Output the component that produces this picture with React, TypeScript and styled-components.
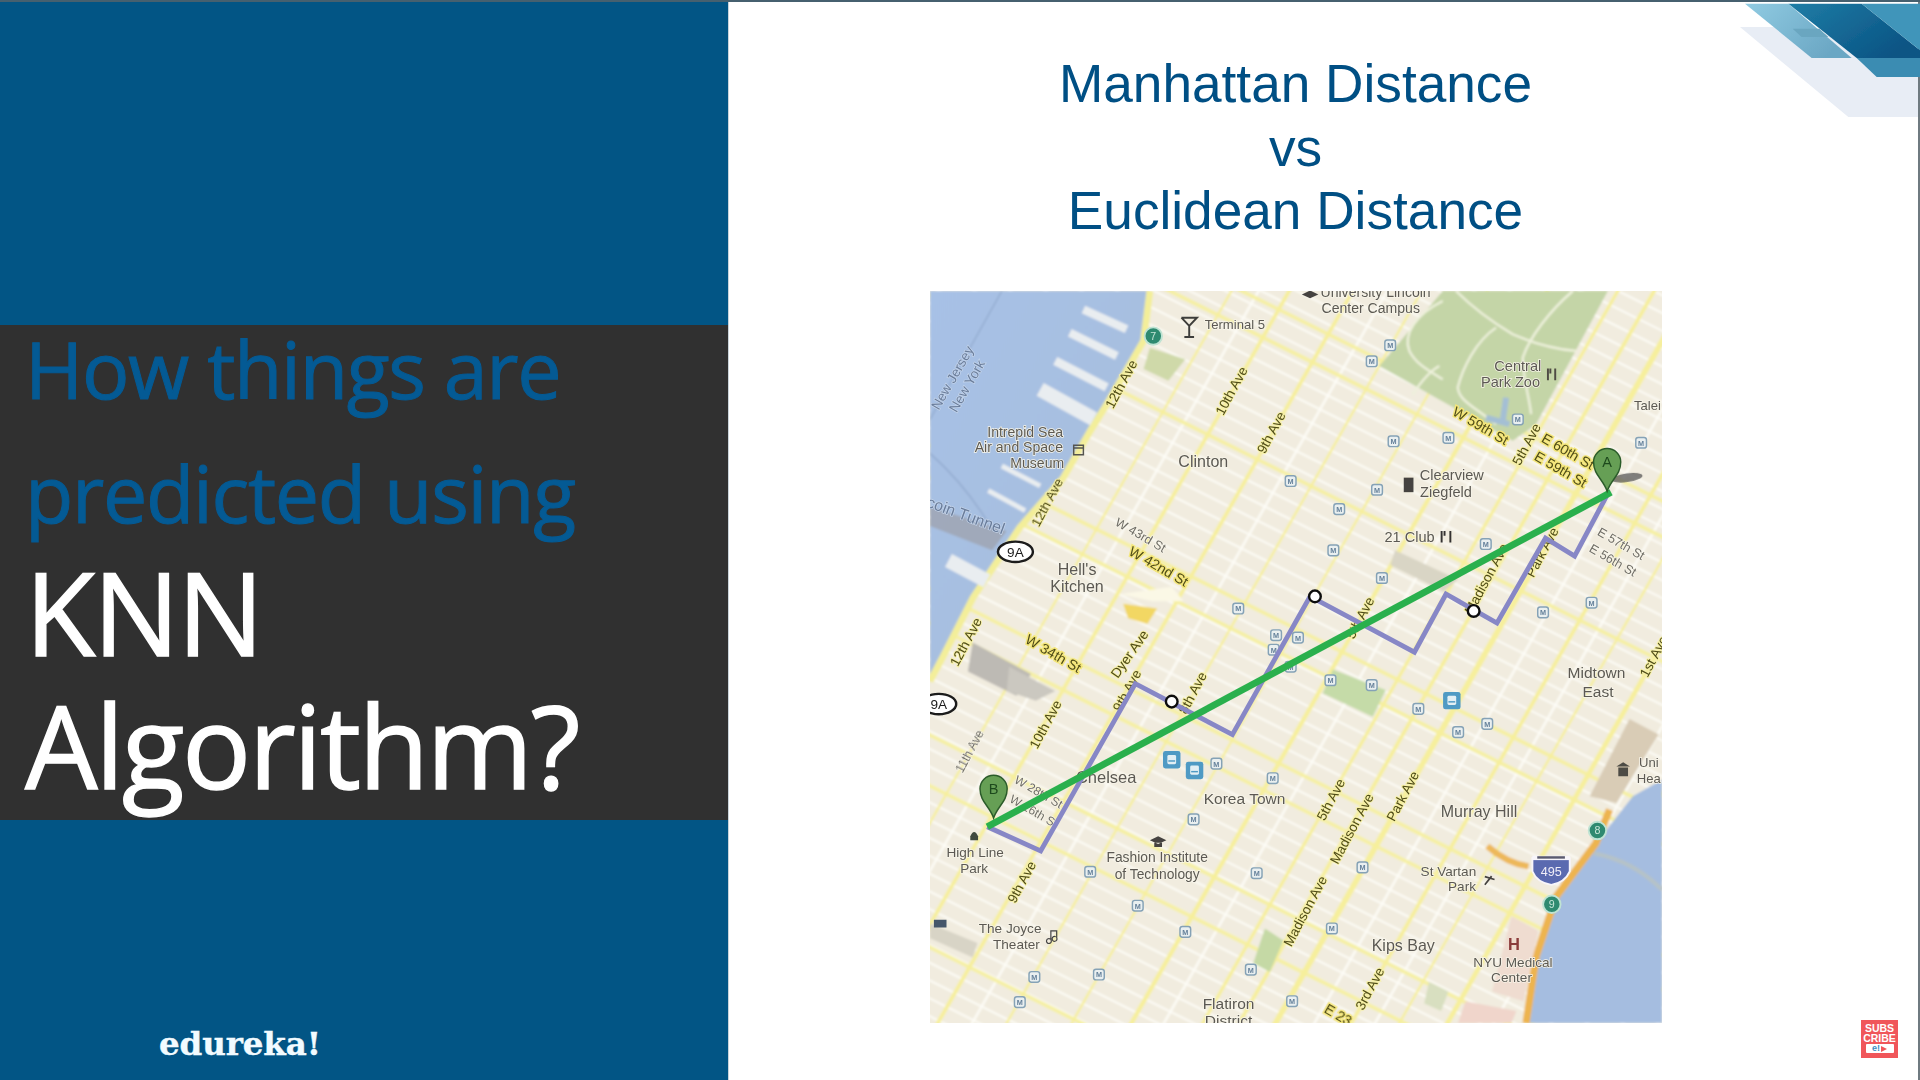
import React from "react";
import styled, { createGlobalStyle } from "styled-components";

const Global = createGlobalStyle`
  html, body { margin: 0; padding: 0; background: #fff; }
  #root { width: 1920px; height: 1080px; }
`;

const Stage = styled.div`
  position: relative;
  width: 1920px;
  height: 1080px;
  display: flex;
  overflow: hidden;
  background: #fff;
  box-sizing: border-box;
  border-top: 2px solid #46606f;
`;
const LeftPanel = styled.aside`
  width: 728px;
  flex: none;
  display: flex;
  flex-direction: column;
  background: #025585;
  border-right: 1px solid #c9d3da;
`;
const TopFill = styled.div`
  height: 323px;
  flex: none;
`;
const DarkBand = styled.div`
  height: 495px;
  flex: none;
  background: #303030;
  padding-left: 25px;
  box-sizing: border-box;
  display: flex;
  flex-direction: column;
`;
const AccentLines = styled.div`
  display: flex;
  flex-direction: column;
  gap: 37px;
  margin-bottom: 26px;
`;
const WhiteLines = styled.div`
  display: flex;
  flex-direction: column;
  gap: 33px;
`;
const Headline = styled.div<{ $accent?: boolean }>`
  font-family: "Open Sans", sans-serif;
  font-weight: 400;
  font-size: ${(p) => (p.$accent ? 79 : 115)}px;
  line-height: ${(p) => (p.$accent ? 87 : 100)}px;
  color: ${(p) => (p.$accent ? "#045a94" : "#fff")};
  letter-spacing: ${(p) => (p.$accent ? "-0.017em" : "-0.021em")};
  -webkit-text-stroke: ${(p) => (p.$accent ? "1px #045a94" : "1.4px #fff")};
  white-space: nowrap;
`;
const LogoRow = styled.div`
  flex: 1;
  display: flex;
  align-items: flex-end;
  padding: 0 0 16px 159px;
`;
const Logo = styled.div`
  font-family: "DejaVu Serif", serif;
  font-weight: 700;
  font-size: 32.5px;
  line-height: 40px;
  color: #f2fbff;
  -webkit-text-stroke: 0.4px #f2fbff;
  letter-spacing: -0.1px;
`;
const RightPanel = styled.main`
  flex: 1;
  display: flex;
  flex-direction: column;
  align-items: center;
  padding: 50px 56px 0 0;
  border-right: 2px solid #6f7a80;
`;
const Title = styled.h1`
  margin: 0;
  font-family: "Liberation Sans", Arial, sans-serif;
  font-weight: 400;
  font-size: 53.2px;
  line-height: 63.5px;
  color: #004f84;
  text-align: center;
`;
const MapFrame = styled.figure`
  margin: 48px 0 0 1px;
  width: 732px;
  height: 732px;
  background: #f1ecdf;
  overflow: hidden;
  svg { display: block; width: 100%; height: 100%; }
`;
const Corner = styled.div`
  position: absolute;
  top: 0;
  right: 0;
  width: 220px;
  height: 130px;
`;
const Badge = styled.div`
  position: absolute;
  left: 1861px;
  top: 1018px;
  width: 37px;
  height: 38px;
  background: #f0565a;
  color: #fff;
  font-family: "Liberation Sans", sans-serif;
  font-weight: 700;
  font-size: 10.5px;
  line-height: 10px;
  text-align: center;
  padding-top: 3px;
  box-sizing: border-box;
  display: flex;
  flex-direction: column;
  align-items: center;
`;
const BadgePlay = styled.div`
  margin-top: 1px;
  width: 28px;
  height: 9px;
  background: #fff;
  border-radius: 1px;
  display: flex;
  align-items: center;
  justify-content: center;
  gap: 1px;
  color: #3c8ec4;
  font-size: 9px;
  line-height: 9px;
`;
const BadgeTriangle = styled.span`
  width: 0;
  height: 0;
  border-left: 6px solid #f0565a;
  border-top: 3.5px solid transparent;
  border-bottom: 3.5px solid transparent;
`;

type L = [number, number, string, number?, number?, string?];
const FONT = "Liberation Sans, sans-serif";
const avenueLabels: L[] = [
  [418, 218, "12th Ave"], [645, 232, "10th Ave"], [727, 318, "9th Ave"], [265, 462, "12th Ave"],
  [1253, 342, "5th Ave"], [1170, 620, "Madison Ave"], [1285, 565, "Park Ave"], [98, 750, "12th Ave"],
  [435, 775, "Dyer Ave", 28, -55], [430, 850, "9th Ave"], [565, 855, "8th Ave"], [910, 700, "5th Ave"],
  [262, 920, "10th Ave"], [850, 1075, "5th Ave"], [893, 1135, "Madison Ave"], [998, 1068, "Park Ave"],
  [213, 1245, "9th Ave"], [797, 1305, "Madison Ave"], [930, 1465, "3rd Ave"], [1515, 780, "1st Ave"],
];
const streetLabels: L[] = [
  [1155, 305, "W 59th St", 29, 30], [1335, 358, "E 60th St", 29, 30], [1320, 395, "E 59th St", 29, 30],
  [492, 595, "W 42nd St", 29, 30], [275, 775, "W 34th St", 29, 30], [862, 1520, "E 23", 29, 30],
];
const placeLabels: L[] = [
  [940, 38, "University Lincoln", 29], [930, 71, "Center Campus", 29], [650, 104, "Terminal 5", 27],
  [1233, 191, "Central", 30], [1218, 224, "Park Zoo", 30], [218, 326, "Intrepid Sea", 29],
  [205, 358, "Air and Space", 29], [243, 391, "Museum", 29], [585, 389, "Clinton", 33],
  [1097, 415, "Clearview", 30], [1085, 450, "Ziegfeld", 30], [1010, 543, "21 Club", 30],
  [325, 611, "Hell's", 33], [325, 646, "Kitchen", 33], [1395, 824, "Midtown", 32], [1398, 862, "East", 32],
  [385, 1039, "Chelsea", 34], [670, 1084, "Korea Town", 32], [1153, 1111, "Murray Hill", 33],
  [115, 1193, "High Line", 28], [113, 1225, "Park", 28], [490, 1203, "Fashion Institute", 28.5],
  [490, 1238, "of Technology", 28.5], [1090, 1231, "St Vartan", 28], [1118, 1263, "Park", 28],
  [187, 1350, "The Joyce", 28], [200, 1382, "Theater", 28], [997, 1387, "Kips Bay", 33],
  [1223, 1419, "NYU Medical", 28], [1220, 1450, "Center", 28], [637, 1507, "Flatiron", 32],
  [637, 1541, "District", 32], [1500, 271, "Talei", 27], [1503, 1007, "Uni", 27], [1503, 1039, "Hea", 27],
];
const tiltLabels: L[] = [
  [455, 530, "W 43rd St", 26, 30], [1445, 548, "E 57th St", 26, 30], [1428, 582, "E 56th St", 26, 30],
  [105, 975, "11th Ave", 25, -62], [245, 1060, "W 28th St", 25, 30], [235, 1100, "W 26th St", 25, 30],
];
const waterLabels: L[] = [
  [70, 205, "New Jersey", 28, -60], [100, 222, "New York", 28, -60], [95, 490, "coin Tunnel", 33, 20],
];
const metro = [
  [970,137],[932,170],[1233,290],[977,335],[1090,328],[1487,338],[765,417],[943,435],[865,475],[853,560],
  [1167,547],[953,617],[1285,688],[1385,668],[657,680],[735,735],[780,740],[730,765],[765,800],[847,828],
  [932,838],[1028,887],[1110,935],[1170,918],[612,1000],[728,1030],[565,1115],[352,1223],[695,1226],[913,1214],
  [450,1293],[548,1347],[850,1340],[683,1425],[237,1440],[370,1435],[207,1492],[768,1490],
];
const bigStops = [[520, 992], [567, 1014], [1097, 870]];
const piers = [
  [338,63,427,104,17],[310,111,407,159,17],[280,169,386,224,18],[249,228,359,289,30],
  [170,386,249,427,10],[142,437,218,478,10],[60,581,139,623,30],
];
const streets = Array.from({ length: 70 }, (_, i) => -952 + i * 36.75);
const wideStreets = [-307, -233, 24, 334, 400, 629, 700, 930, 1035, 1368];
const avenues: [number, number][] = [
  [-226, 5], [-107, 8], [24, 8], [166, 5], [300, 5], [423, 9], [570, 7], [645, 8], [720, 12], [876, 8], [975, 5], [1074, 10], [1250, 6],
];
const whiteAvenues = [-170, 95, 490, 800, 925, 1170];

const CityMap = () => (
  <svg viewBox="22 25 1508 1510" preserveAspectRatio="none">
    <defs>
      <filter id="soft" x="0" y="0" width="1" height="1"><feGaussianBlur stdDeviation="1.7" /></filter>
      <filter id="softer" x="-0.2" y="-0.2" width="1.4" height="1.4"><feGaussianBlur stdDeviation="1" /></filter>
      <linearGradient id="river" x1="0" y1="0" x2="1" y2="1">
        <stop offset="0" stopColor="#a7c1e6" /><stop offset="1" stopColor="#a8bedb" />
      </linearGradient>
    </defs>
    <g filter="url(#soft)">
      <rect x="22" y="25" width="1508" height="1510" fill="#f1ecdf" />
      {streets.map((c) => (
        <line key={c} x1={0} y1={c} x2={1600} y2={c + 800} stroke="#fdfcf6" strokeWidth="4" />
      ))}
      {whiteAvenues.map((c) => (
        <line key={c} x1={c} y1={1560} x2={c + 900} y2={-30} stroke="#fdfcf6" strokeWidth="5" />
      ))}
      {wideStreets.map((c) => (
        <line key={c} x1={0} y1={c} x2={1600} y2={c + 800} stroke="#f5f0a4" strokeWidth="8" />
      ))}
      {avenues.map(([c, w]) => (
        <line key={c} x1={c} y1={1560} x2={c + 900} y2={-30} stroke="#f6ef9c" strokeWidth={w} />
      ))}
      <polygon points="22,25 475,25 462,128 386,259 352,314 297,410 207,513 111,657 49,779 22,830" fill="url(#river)" />
      <path d="M22 290 L170 25 M22 360 Q90 420 140 500" fill="none" stroke="#93abd0" strokeWidth="3" />
      <polygon points="22,470 180,520 150,560 22,510" fill="#9d9faa" opacity="0.7" />
      <polyline points="475,25 462,128 386,259 352,314 297,410 207,513 111,657 49,779 22,830" fill="none" stroke="#f3ee9a" strokeWidth="14" />
      <polygon points="1530,1033 1470,1067 1394,1164 1312,1274 1271,1397 1250,1535 1530,1535" fill="#a5bde0" />
      <path d="M1390 1185 Q1470 1200 1530 1260" fill="none" stroke="#b5c2c8" strokeWidth="9" />
      <polyline points="1422,1095 1394,1164 1312,1274 1271,1397 1250,1535" fill="none" stroke="#edb450" strokeWidth="15" />
      <path d="M1170 1170 Q1210 1205 1255 1212" fill="none" stroke="#edb85a" strokeWidth="13" />
      <g transform="translate(776 25) scale(0.687)" fill="none">
        <polygon points="440,0 250,225 650,450 720,400 935,0" fill="#c4d5a7" />
        <g stroke="#eef1dc" strokeWidth="7">
          <path d="M440 30 C360 70 320 130 340 180 C360 220 400 240 440 265" />
          <path d="M430 225 C400 240 370 280 350 310" />
          <path d="M480 0 C540 60 600 100 650 130 C720 160 780 175 840 180" />
          <path d="M600 110 C540 150 500 230 485 290 C490 330 530 345 600 400" />
          <path d="M830 0 C760 60 700 140 680 200 C680 260 700 320 705 370" />
        </g>
        <path d="M630 320 L620 390 M570 380 L640 400" stroke="#a4bfd4" strokeWidth="18" />
      </g>
      <polygon points="475,142 548,166 513,210 462,186" fill="#cfd9a9" />
      <polygon points="852,806 961,848 934,903 831,855" fill="#c5dba8" />
      <polygon points="712,1340 750,1365 722,1430 688,1412" fill="#c5d9a5" />
      <polygon points="1050,1450 1090,1470 1075,1510 1040,1495" fill="#d8dfc0" />
      <polygon points="110,750 230,815 200,860 100,810" fill="#bdbab4" />
      <polygon points="185,800 280,850 240,870 180,850" fill="#cbc8c0" />
      <polygon points="22,1330 120,1370 110,1400 22,1360" fill="#d8d4c6" />
      <polygon points="1463,908 1523,940 1436,1081 1381,1067" fill="#d9ccb6" />
      <polygon points="420,670 490,680 470,712 430,700" fill="#f2d764" />
      <polygon points="415,650 520,635 545,665 480,665" fill="#fbf8e6" />
      <polygon points="980,560 1110,620 1080,645 970,590" fill="#d9d5c5" />
      <polygon points="1220,1315 1275,1345 1245,1490 1180,1470" fill="#efdcd0" />
      <polygon points="1125,1490 1230,1510 1220,1535 1110,1535" fill="#f0d5cb" />
      {piers.map(([a, b, c, d, w]) => (
        <line key={a + "-" + b} x1={a} y1={b} x2={c} y2={d} stroke="#e9edf0" strokeWidth={w} />
      ))}
    </g>
    <g filter="url(#softer)">
      {avenueLabels.map(([x, y, t, s = 28, r = -62]) => (
        <text key={t + x} x={x} y={y} fontSize={s} textAnchor="middle" dominantBaseline="middle" transform={`rotate(${r} ${x} ${y})`} fontFamily={FONT} fill="#4f4c18" stroke="#f6f0a6" strokeWidth="4" style={{ paintOrder: "stroke" }}>{t}</text>
      ))}
      {streetLabels.map(([x, y, t, s = 29, r = 30]) => (
        <text key={t + x} x={x} y={y} fontSize={s} textAnchor="middle" dominantBaseline="middle" transform={`rotate(${r} ${x} ${y})`} fontFamily={FONT} fill="#4f4c18" stroke="#f4e67a" strokeWidth="6" style={{ paintOrder: "stroke" }}>{t}</text>
      ))}
      {tiltLabels.map(([x, y, t, s = 25, r = 0]) => (
        <text key={t + x} x={x} y={y} fontSize={s} textAnchor="middle" dominantBaseline="middle" transform={`rotate(${r} ${x} ${y})`} fontFamily={FONT} fill="#6f6d66" stroke="#f8f5ea" strokeWidth="3" style={{ paintOrder: "stroke" }}>{t}</text>
      ))}
      {waterLabels.map(([x, y, t, s = 28, r = 0]) => (
        <text key={t + x} x={x} y={y} fontSize={s} textAnchor="middle" dominantBaseline="middle" transform={`rotate(${r} ${x} ${y})`} fontFamily={FONT} fill="#6a7d9b" stroke="#c4d4ea" strokeWidth="3" style={{ paintOrder: "stroke" }}>{t}</text>
      ))}
      {placeLabels.map(([x, y, t, s = 29]) => (
        <text key={t + x + y} x={x} y={y} fontSize={s} textAnchor="middle" fontFamily={FONT} fill="#5b5952" stroke="#f8f5ea" strokeWidth="3" style={{ paintOrder: "stroke" }}>{t}</text>
      ))}
      {metro.map(([x, y]) => (
        <g key={x + "-" + y}>
          <rect x={x - 11} y={y - 11} width="22" height="22" rx="5" fill="#e9eff0" stroke="#85a2b6" strokeWidth="3" />
          <text x={x} y={y + 6} fontSize="15" fontWeight="700" textAnchor="middle" fontFamily={FONT} fill="#64809a">M</text>
        </g>
      ))}
      {bigStops.map(([x, y]) => (
        <g key={x + "-" + y}>
          <rect x={x - 18} y={y - 18} width="36" height="36" rx="5" fill="#4f9ac4" />
          <rect x={x - 9} y={y - 10} width="18" height="19" rx="3" fill="#e3eff4" />
          <rect x={x - 7} y={y + 1} width="14" height="3" fill="#4f9ac4" />
        </g>
      ))}
      {[[482, 118, "7"], [1397, 1138, "8"], [1303, 1290, "9"]].map(([x, y, t]) => (
        <g key={String(t)}>
          <circle cx={x as number} cy={y as number} r="18" fill="#2f8a70" stroke="#bfe3d3" strokeWidth="4" />
          <text x={x as number} y={(y as number) + 8} fontSize="22" textAnchor="middle" fontFamily={FONT} fill="#c7e6d8">{t}</text>
        </g>
      ))}
      {[[198, 563], [40, 877]].map(([x, y]) => (
        <g key={x}>
          <ellipse cx={x} cy={y} rx="36" ry="21" fill="#fff" stroke="#1a1a1a" strokeWidth="5" />
          <text x={x} y={y + 10} fontSize="28" textAnchor="middle" fontFamily={FONT} fill="#1a1a1a">9A</text>
        </g>
      ))}
      <path d="M1263 1195 H1340 V1222 Q1330 1245 1302 1250 Q1272 1245 1263 1222Z" fill="#5a6ab0" stroke="#f7f5fa" strokeWidth="4" />
      <rect x="1263" y="1190" width="77" height="9" fill="#f7f5fa" />
      <rect x="1273" y="1191" width="57" height="5" fill="#5a5a6e" />
      <text x="1302" y="1231" fontSize="26" textAnchor="middle" fontFamily={FONT} fill="#f0eef8">495</text>
      <text x="1225" y="1384" fontSize="34" textAnchor="middle" fontFamily={FONT} fontWeight="700" fill="#8a3a3a">H</text>
      <path d="M540 80 H572 L556 97 V120 M546 120 H566 M556 97 L540 80" fill="none" stroke="#3e3e3a" strokeWidth="4" />
      <path d="M998 410 h20 v30 h-20z" fill="#45433f" />
      <path d="M1295 185 v24 M1300 185 v10 M1310 185 v24" stroke="#4f4c44" strokeWidth="4" />
      <path d="M1076 520 v24 M1082 520 v10 M1094 520 v24" stroke="#353330" strokeWidth="4" />
      <path d="M318 343 h20 v20 h-20z M318 349 h20" fill="none" stroke="#55544f" strokeWidth="3" />
      <path d="M1440 1008 h20 v18 h-20z M1436 1006 l14 -9 l14 9z" fill="#4e4c45" />
      <path d="M475 1158 l17 -8 l17 8 l-17 8z M484 1163 v9 h16 v-9" fill="#45433f" />
      <path d="M788 32 l17 -8 l17 8 l-17 8z" fill="#45433f" />
      <path d="M30 1322 h26 v16 h-26z" fill="#45566a" />
      <path d="M105 1150 q8 -18 16 0 v8 h-16z" fill="#3f4a3c" />
      <path d="M270 1362 a5 5 0 1 0 1 1 v-18 h12 v14 a5 5 0 1 1 -2 -2" fill="none" stroke="#444" strokeWidth="2.5" />
      <path d="M1165 1250 l14 -18 M1165 1233 l20 6" stroke="#45433f" strokeWidth="3.5" />
    </g>
    <g filter="url(#softer)">
      <ellipse cx="1458" cy="410" rx="32" ry="9" fill="#565656" opacity="0.75" transform="rotate(-8 1458 410)" />
      <polyline points="140,1130 250,1180 445,835 645,940 805,655 1020,770 1085,650 1190,710 1290,535 1350,572 1420,440" fill="none" stroke="#8787c6" strokeWidth="10" />
      <line x1="140" y1="1130" x2="1425" y2="440" stroke="#2cb04e" strokeWidth="14" />
      {[[815, 655], [1142, 685], [520, 872]].map(([x, y]) => (
        <circle key={x} cx={x} cy={y} r="12" fill="#fff" stroke="#111" strokeWidth="5" />
      ))}
      {[[1417, 378, "A"], [153, 1052, "B"]].map(([x, y, t]) => {
        const cx = x as number, cy = y as number;
        return (
          <g key={String(t)}>
            <path d={`M${cx} ${cy + 60} C${cx - 8} ${cy + 36} ${cx - 28} ${cy + 26} ${cx - 28} ${cy} A28 28 0 0 1 ${cx + 28} ${cy} C${cx + 28} ${cy + 26} ${cx + 8} ${cy + 36} ${cx} ${cy + 60}Z`} fill="#669f55" stroke="#2c5c2a" strokeWidth="3" />
            <text x={cx} y={cy + 11} fontSize="30" textAnchor="middle" fontFamily={FONT} fill="#1f4a1e">{t}</text>
          </g>
        );
      })}
    </g>
  </svg>
);

const CornerArt = () => (
  <svg viewBox="0 0 660 390" width="220" height="130" style={{ display: "block" }}>
    <defs>
      <filter id="cornerBlur" x="-0.05" y="-0.05" width="1.1" height="1.1"><feGaussianBlur stdDeviation="1.5" /></filter>
      <linearGradient id="bandDark" x1="0" y1="0" x2="1" y2="0.6">
        <stop offset="0" stopColor="#1f7da6" /><stop offset="1" stopColor="#0a5484" />
      </linearGradient>
      <linearGradient id="bandLight" x1="0" y1="0" x2="1" y2="0.5">
        <stop offset="0" stopColor="#90cbe2" /><stop offset="1" stopColor="#6ba7c4" />
      </linearGradient>
    </defs>
    <g filter="url(#cornerBlur)">
      <polygon points="120,75 300,75 654,170 654,345 445,345" fill="#e8edf5" />
      <polygon points="135,5 335,168 455,168 265,5" fill="url(#bandLight)" />
      <polygon points="265,5 470,168 660,168 660,145 485,5" fill="url(#bandDark)" />
      <polygon points="485,5 660,145 660,5" fill="#3f95ba" />
      <polygon points="470,168 530,225 660,225 660,168" fill="#3a8cb2" />
      <polygon points="278,80 358,80 385,105 305,105" fill="#6aa6c0" />
    </g>
  </svg>
);

export default function App() {
  return (
    <Stage>
      <Global />
      <LeftPanel>
        <TopFill />
        <DarkBand>
          <AccentLines>
            <Headline $accent>How things are</Headline>
            <Headline $accent>predicted using</Headline>
          </AccentLines>
          <WhiteLines>
            <Headline>KNN</Headline>
            <Headline>Algorithm?</Headline>
          </WhiteLines>
        </DarkBand>
        <LogoRow><Logo>edureka!</Logo></LogoRow>
      </LeftPanel>
      <RightPanel>
        <Title>Manhattan Distance<br />vs<br />Euclidean Distance</Title>
        <MapFrame><CityMap /></MapFrame>
      </RightPanel>
      <Corner><CornerArt /></Corner>
      <Badge>
        SUBS<br />CRIBE
        <BadgePlay>e!<BadgeTriangle /></BadgePlay>
      </Badge>
    </Stage>
  );
}
